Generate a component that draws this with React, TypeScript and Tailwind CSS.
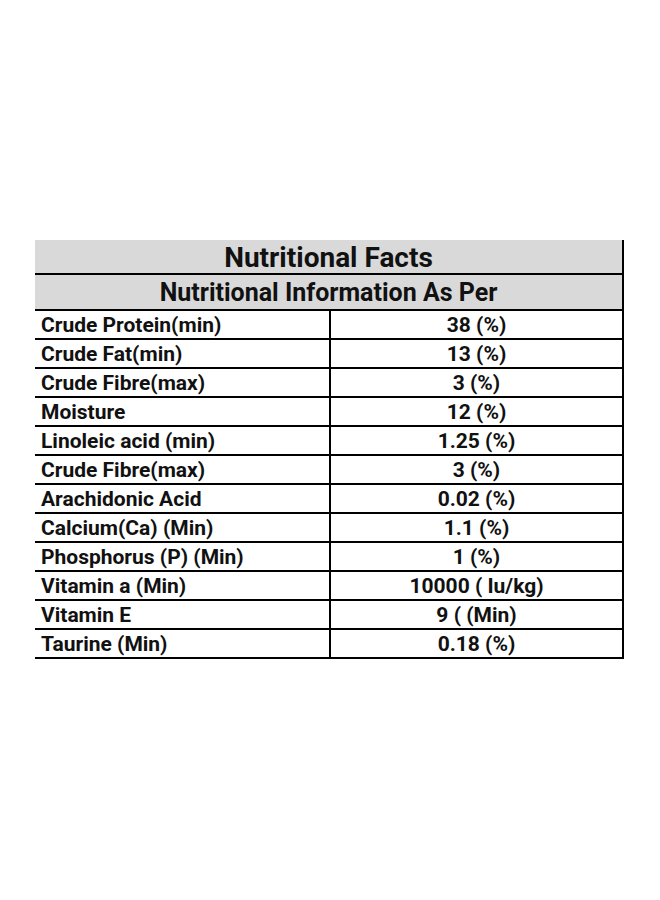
// App.tsx
const rows: [string, string][] = [
  ["Crude Protein(min)", "38 (%)"],
  ["Crude Fat(min)", "13 (%)"],
  ["Crude Fibre(max)", "3 (%)"],
  ["Moisture", "12 (%)"],
  ["Linoleic acid (min)", "1.25 (%)"],
  ["Crude Fibre(max)", "3 (%)"],
  ["Arachidonic Acid", "0.02 (%)"],
  ["Calcium(Ca) (Min)", "1.1 (%)"],
  ["Phosphorus (P) (Min)", "1 (%)"],
  ["Vitamin a (Min)", "10000 ( Iu/kg)"],
  ["Vitamin E", "9 ( (Min)"],
  ["Taurine (Min)", "0.18 (%)"],
];

export default function App() {
  return (
    <div className="min-h-[900px] bg-white pl-[35px] pt-[240px]">
      {/* Facts table */}
      <div className="w-[589px] border-b-2 border-r-2 border-black font-[Roboto,sans-serif] font-bold text-[#111]">
        <div className="h-[35px] border-b-2 border-black bg-[#d9d9d9] text-center text-[28px] leading-[36px]">
          Nutritional Facts
        </div>
        <div className="h-[36px] border-b-2 border-black bg-[#d9d9d9] text-center text-[25px] leading-[36px]">
          Nutritional Information As Per
        </div>

        {rows.map(([label, value], i) => (
          <div
            key={i}
            className={
              i === rows.length - 1
                ? "flex h-[27px] text-[21px] leading-[28px]"
                : "flex h-[29px] border-b-2 border-black text-[21px] leading-[28px]"
            }
          >
            <div className="w-[296px] border-r-2 border-black pl-[6px]">{label}</div>
            <div className="flex-1 text-center">{value}</div>
          </div>
        ))}
      </div>
    </div>
  );
}
